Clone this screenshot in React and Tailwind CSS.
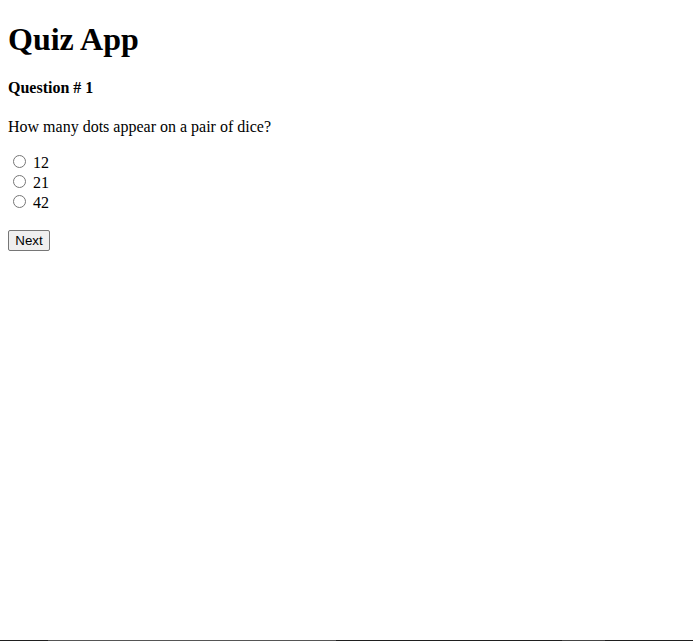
export default function App() {
  const opts = ["12", "21", "42"];
  return (
    <div className="flex min-h-screen flex-col bg-white text-black">
      <div className="flex-1 px-2 pt-px font-['Liberation_Serif',serif] text-base leading-[normal]">
        <h1 className="mt-[20.44px] mb-[20.28px] text-[32px] font-bold leading-[normal]">Quiz App</h1>
        <h4 className="mt-[20.28px] mb-[21.28px] text-base font-bold leading-[normal]">Question # 1</h4>
        <p className="my-4">How many dots appear on a pair of dice?</p>
        <div>
          {opts.map((o) => (
            <div key={o}>
              <input type="radio" name="q" className="m-[3px_3px_0_5px] h-[13px] w-[13px] align-baseline" />{" "}
              <label>{o}</label>
            </div>
          ))}
        </div>
        <div className="mt-[18px]">
          <button className="h-[21px] w-[42px] rounded-[2px] border border-[#767676] bg-[#efefef] px-[6px] py-px font-['Liberation_Sans',Arial,sans-serif] text-[13.333px] leading-[normal] text-black">
            Next
          </button>
        </div>
      </div>
      <div className="flex h-px w-full">
        <div className="w-[48px] bg-[#1f1f1f]" />
        <div className="w-[288px] bg-[#555555]" />
        <div className="w-[226px] bg-[#1f1f1f]" />
        <div className="w-[43px] bg-[#444444]" />
        <div className="flex-1 bg-[#1f1f1f]" />
      </div>
    </div>
  );
}
